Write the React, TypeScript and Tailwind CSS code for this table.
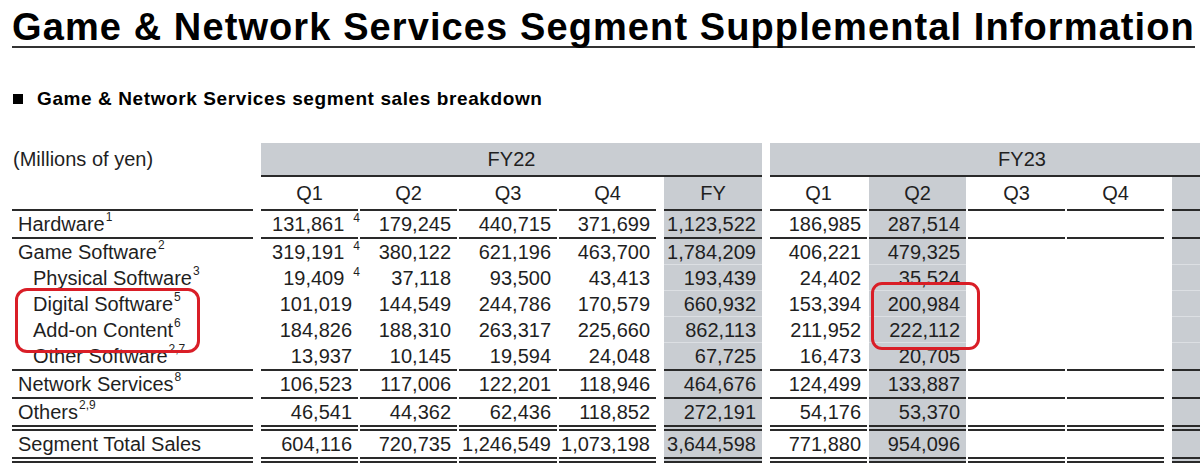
type Line = 'none' | 'single' | 'double'

interface Row {
  label: string
  sup?: string
  indent?: boolean
  q1sup?: string
  fy22: string[]
  fy23: string[]
  line: Line
}

const rows: Row[] = [
  { label: 'Hardware', sup: '1', q1sup: '4', fy22: ['131,861', '179,245', '440,715', '371,699', '1,123,522'], fy23: ['186,985', '287,514'], line: 'single' },
  { label: 'Game Software', sup: '2', q1sup: '4', fy22: ['319,191', '380,122', '621,196', '463,700', '1,784,209'], fy23: ['406,221', '479,325'], line: 'none' },
  { label: 'Physical Software', sup: '3', indent: true, q1sup: '4', fy22: ['19,409', '37,118', '93,500', '43,413', '193,439'], fy23: ['24,402', '35,524'], line: 'none' },
  { label: 'Digital Software', sup: '5', indent: true, fy22: ['101,019', '144,549', '244,786', '170,579', '660,932'], fy23: ['153,394', '200,984'], line: 'none' },
  { label: 'Add-on Content', sup: '6', indent: true, fy22: ['184,826', '188,310', '263,317', '225,660', '862,113'], fy23: ['211,952', '222,112'], line: 'none' },
  { label: 'Other Software', sup: '2,7', indent: true, fy22: ['13,937', '10,145', '19,594', '24,048', '67,725'], fy23: ['16,473', '20,705'], line: 'single' },
  { label: 'Network Services', sup: '8', fy22: ['106,523', '117,006', '122,201', '118,946', '464,676'], fy23: ['124,499', '133,887'], line: 'single' },
  { label: 'Others', sup: '2,9', fy22: ['46,541', '44,362', '62,436', '118,852', '272,191'], fy23: ['54,176', '53,370'], line: 'double' },
  { label: 'Segment Total Sales', fy22: ['604,116', '720,735', '1,246,549', '1,073,198', '3,644,598'], fy23: ['771,880', '954,096'], line: 'double' },
]

// label | gap | Q1 Q2 Q3 Q4 | gap | FY | gap | Q1 Q2 Q3 Q4 | gap | FY
const grid =
  'grid grid-cols-[241px_4px_97px_97px_98px_97px_4px_98px_4px_97px_97px_97px_97px_4px_98px] gap-x-[2px]'

function lineCls(line: Line, gray: boolean) {
  if (line === 'single') return 'h-[28px] border-b-2 border-[#2a2a2a]'
  if (line === 'double') return 'h-[32px] border-b-[6px] border-double border-[#2a2a2a]'
  return gray ? 'h-[26px] border-b border-[#dcdfe3]' : 'h-[26px]'
}

function Num({ value, gray, line, sup }: { value: string; gray?: boolean; line: Line; sup?: string }) {
  return (
    <div className={`flex items-center justify-end pr-[6px] ${gray ? 'bg-[#c9cdd2]' : ''} ${lineCls(line, !!gray)}`}>
      <span>{value}</span>
      {sup && <span className="relative -top-[6px] ml-[9px] -mr-[8px] text-[12px] leading-none">{sup}</span>}
    </div>
  )
}

export default function App() {
  return (
    <div className="relative w-[1200px] h-[469px] overflow-hidden bg-white pl-[12px] font-['Liberation_Sans',Arial,sans-serif] text-[#1f1f1f]">
      <h1 className="mt-[8px] w-fit whitespace-nowrap border-b-2 border-[#333] text-[38px] leading-none font-bold tracking-[1.1px] text-black">
        Game &amp; Network Services Segment Supplemental Information
      </h1>

      <div className="mt-[41px] flex items-center text-[19px] leading-[19px] font-bold tracking-[0.6px] text-black">
        <span className="ml-[1px] mr-[14px] h-[10px] w-[10px] bg-black" />
        Game &amp; Network Services segment sales breakdown
      </div>

      <div className={`${grid} mt-[35px] text-[20px] leading-none`}>
        {/* header row 1 */}
        <div className="flex h-[34px] items-center pb-[2px] pl-[1px]">(Millions of yen)</div>
        <div />
        <div className="col-span-6 flex h-[34px] items-center justify-center border-b-2 border-[#2a2a2a] bg-[#c9cdd2]">FY22</div>
        <div />
        <div className="col-span-6 flex h-[34px] items-center justify-center border-b-2 border-[#2a2a2a] bg-[#c9cdd2]">
          <span className="ml-[4px]">FY23</span>
        </div>

        {/* header row 2 */}
        <div className="h-[34px] border-b-2 border-[#2a2a2a]" />
        <div />
        {['Q1', 'Q2', 'Q3', 'Q4'].map(q => (
          <div key={`a${q}`} className="flex h-[34px] items-center justify-center border-b-2 border-[#2a2a2a]">{q}</div>
        ))}
        <div />
        <div className="flex h-[34px] items-center justify-center border-b-2 border-[#2a2a2a] bg-[#c9cdd2]">FY</div>
        <div />
        {['Q1', 'Q2', 'Q3', 'Q4'].map(q => (
          <div
            key={`b${q}`}
            className={`flex h-[34px] items-center justify-center border-b-2 border-[#2a2a2a] ${q === 'Q2' ? 'bg-[#c9cdd2]' : ''}`}
          >
            {q}
          </div>
        ))}
        <div />
        {/* FY23 full-year column runs off the right edge */}
        <div className="h-[34px] border-b-2 border-[#2a2a2a] bg-[#c9cdd2]" />

        {rows.map(r => (
          <div key={r.label} className="contents">
            <div className={`flex items-center whitespace-nowrap ${r.indent ? 'pl-[21px]' : 'pl-[6px]'} ${lineCls(r.line, false)}`}>
              <span>{r.label}</span>
              {r.sup && <span className="relative -top-[7px] ml-[1px] text-[12px] leading-none">{r.sup}</span>}
            </div>
            <div />
            <Num value={r.fy22[0]} line={r.line} sup={r.q1sup} />
            <Num value={r.fy22[1]} line={r.line} />
            <Num value={r.fy22[2]} line={r.line} />
            <Num value={r.fy22[3]} line={r.line} />
            <div />
            <Num value={r.fy22[4]} line={r.line} gray />
            <div />
            <Num value={r.fy23[0]} line={r.line} />
            <Num value={r.fy23[1]} line={r.line} gray />
            <Num value="" line={r.line} />
            <Num value="" line={r.line} />
            <div />
            <Num value="" line={r.line} gray />
          </div>
        ))}
      </div>

      {/* red highlight boxes */}
      <div className="absolute left-[15px] top-[288px] h-[65px] w-[185px] rounded-[12px] border-[3px] border-[#d91e27]" />
      <div className="absolute left-[871px] top-[282px] h-[68px] w-[109px] rounded-[11px] border-[3px] border-[#d91e27]" />
    </div>
  )
}
